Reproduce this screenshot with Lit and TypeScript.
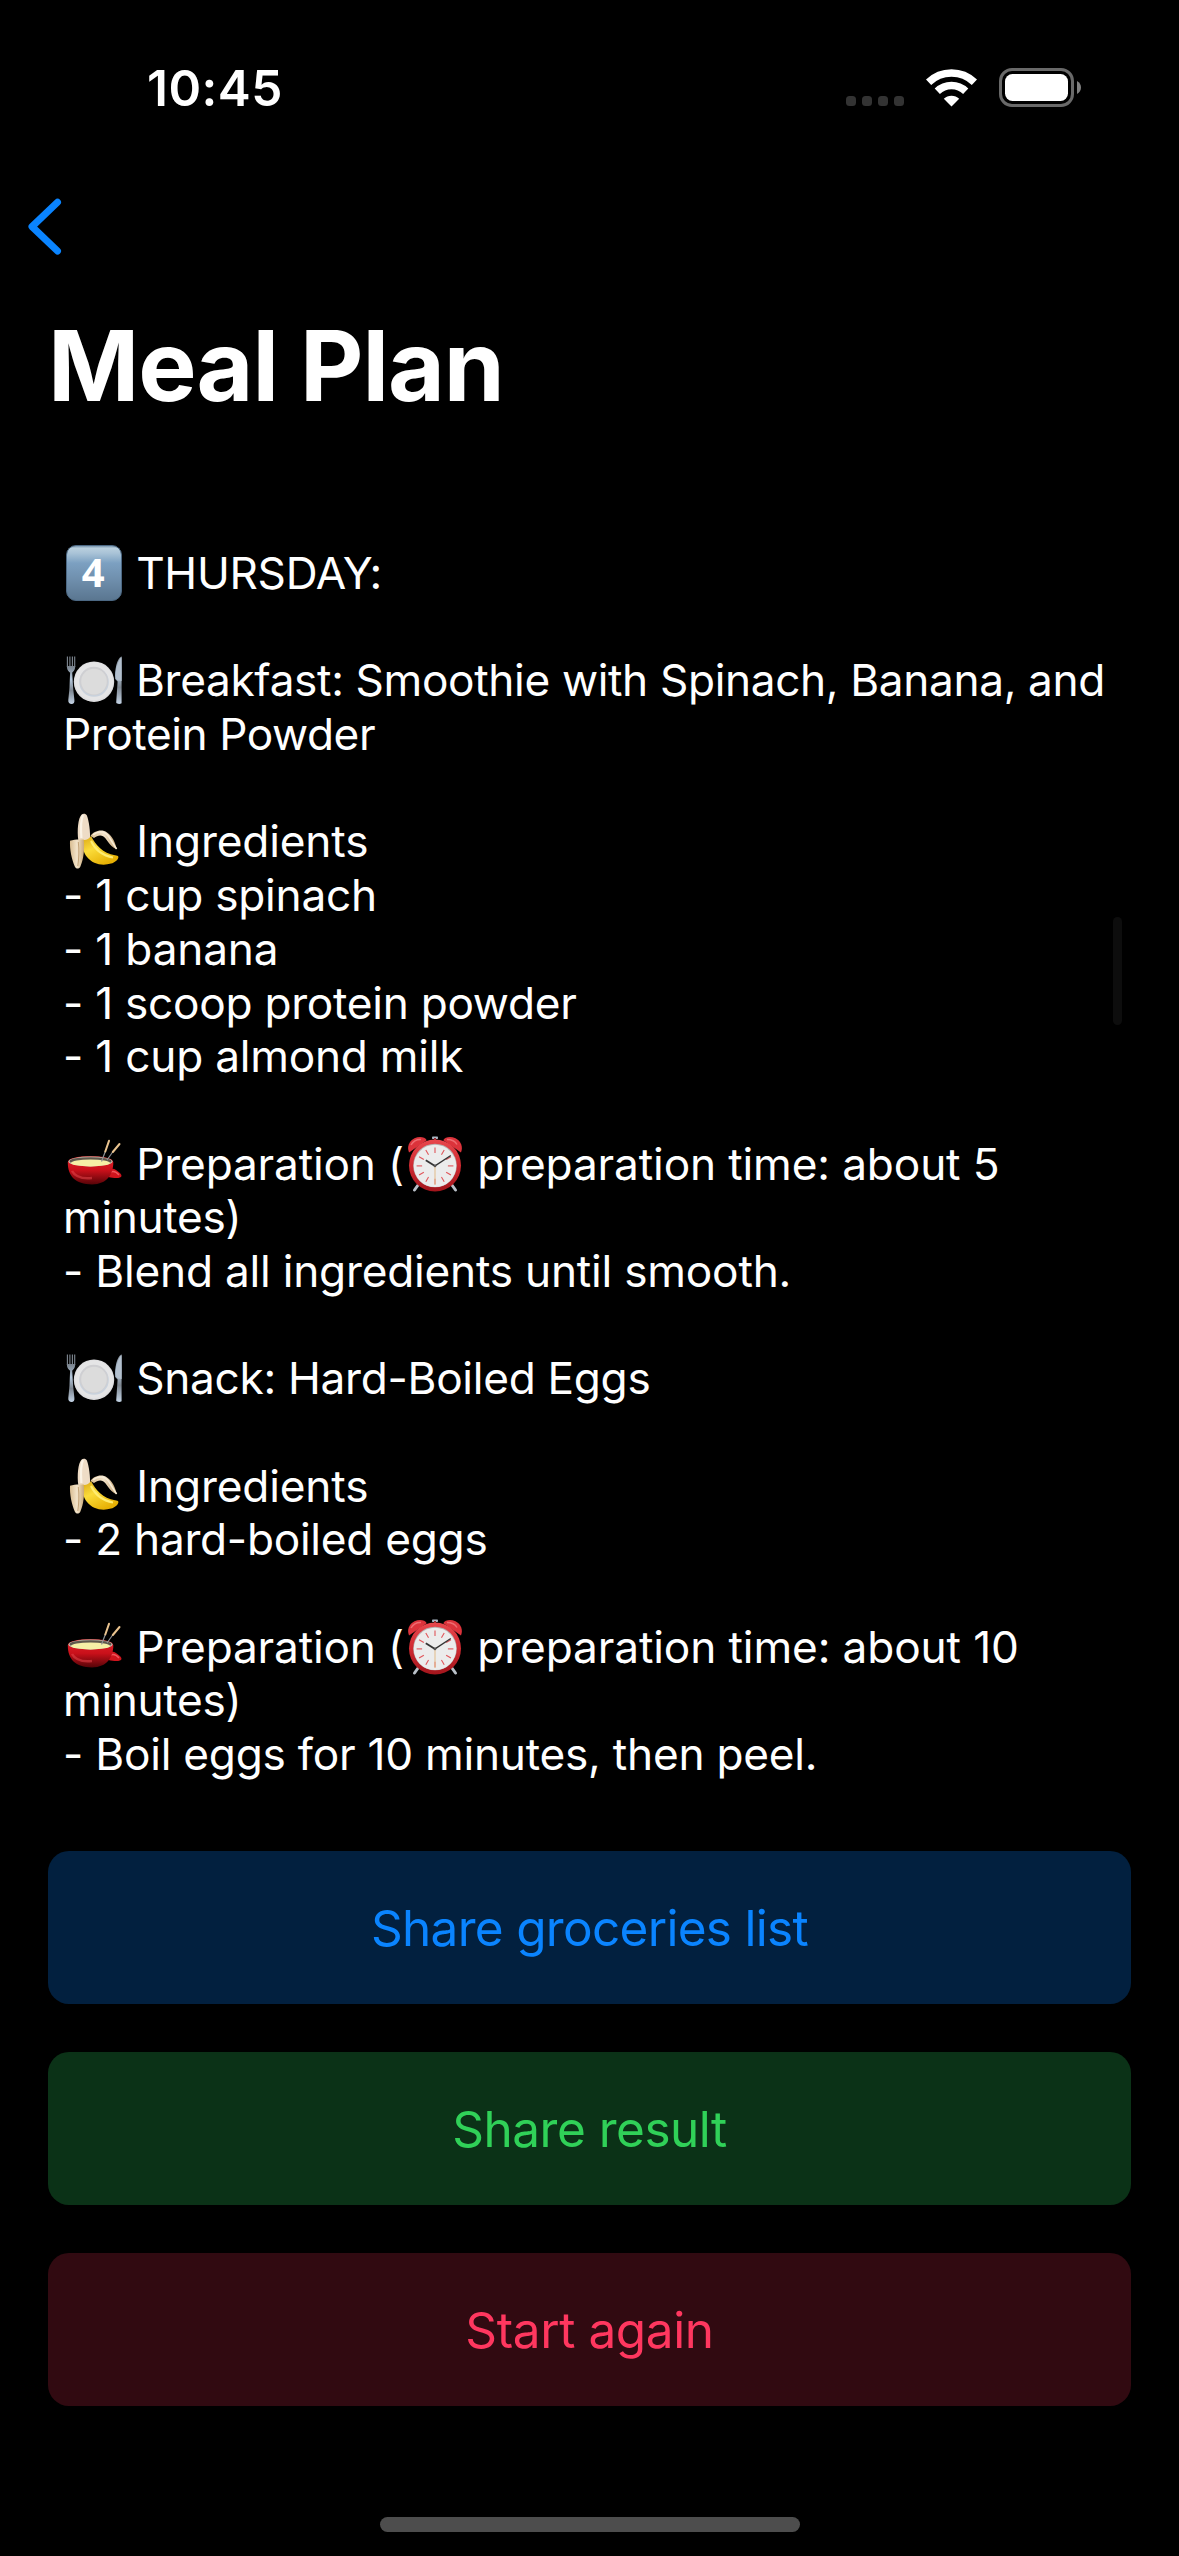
import { LitElement, html, css, svg, nothing } from "lit";
import { customElement, property } from "lit/decorators.js";

type Icon = "four" | "plate" | "banana" | "pot" | "clock";
interface Run { icon?: Icon; text?: string; track?: number }

const line = (...runs: Run[]): Run[] => runs;

const LINES: Run[][] = [
  line({ icon: "four" }, { text: " THURSDAY:", track: -0.3 }),
  line(),
  line({ icon: "plate" }, { text: " Breakfast: Smoothie with Spinach, Banana, and", track: -0.36 }),
  line({ text: "Protein Powder", track: -0.43 }),
  line(),
  line({ icon: "banana" }, { text: " Ingredients", track: -0.15 }),
  line({ text: "- 1 cup spinach", track: -0.23 }),
  line({ text: "- 1 banana", track: -0.2 }),
  line({ text: "- 1 scoop protein powder", track: -0.28 }),
  line({ text: "- 1 cup almond milk", track: -0.23 }),
  line(),
  line({ icon: "pot" }, { text: " Preparation (", track: -0.17 }, { icon: "clock" }, { text: " preparation time: about 5", track: -0.14 }),
  line({ text: "minutes)", track: -0.33 }),
  line({ text: "- Blend all ingredients until smooth.", track: -0.22 }),
  line(),
  line({ icon: "plate" }, { text: " Snack: Hard-Boiled Eggs", track: -0.29 }),
  line(),
  line({ icon: "banana" }, { text: " Ingredients", track: -0.15 }),
  line({ text: "- 2 hard-boiled eggs", track: -0.27 }),
  line(),
  line({ icon: "pot" }, { text: " Preparation (", track: -0.17 }, { icon: "clock" }, { text: " preparation time: about 10", track: -0.12 }),
  line({ text: "minutes)", track: -0.33 }),
  line({ text: "- Boil eggs for 10 minutes, then peel.", track: -0.24 }),
];

const TICKS = Array.from({ length: 12 }, (_, i) => i * 30);

const ART: Record<Icon, () => unknown> = {
  four: () => svg`
    <defs>
      <linearGradient id="k" x1="0" y1="0" x2="0" y2="1">
        <stop offset="0" stop-color="#6d8ba5"/><stop offset=".05" stop-color="#b9cfde"/>
        <stop offset=".14" stop-color="#a9c3d7"/><stop offset=".32" stop-color="#7ca0c1"/>
        <stop offset=".6" stop-color="#7090ae"/><stop offset="1" stop-color="#5a7690"/>
      </linearGradient>
    </defs>
    <rect x=".5" y=".5" width="55" height="55" rx="9.5" fill="url(#k)" stroke="#4c6883"/>
    <text x="27.3" y="42.2" text-anchor="middle" font-family="Noto Sans, sans-serif" font-weight="700" font-size="40" fill="#fff">4</text>`,
  plate: () => svg`
    <defs>
      <linearGradient id="m" x1="0" y1="0" x2="0" y2="1">
        <stop offset="0" stop-color="#77808a"/><stop offset=".35" stop-color="#b5c8dc"/>
        <stop offset=".65" stop-color="#7d8690"/><stop offset="1" stop-color="#c4d4e6"/>
      </linearGradient>
    </defs>
    <path d="M1.4 4.5V15M3.9 4.5V15M6.4 4.5V15M8.7 4.5V15" stroke="#7f8892" stroke-width="1.1"/>
    <path d="M.9 14h8.3c0 4-1.6 5.400-3 6.600l.9 15 1.300 12.400c.3 2.600-.8 3.900-2.800 3.900s-3.600-1.300-3.300-3.900L3.500 35.600l.6-15C2.400 19.400.9 18 .9 14z" fill="url(#m)"/>
    <path d="M55.600 4.300v47c-1.600 1-4.800.900-5.400-.8L51.600 29.500 49.200 27c-.6-9 1.600-20.500 6.400-22.700z" fill="url(#m)"/>
    <path d="M50 26.500c-.2-9 1.800-19 5.600-21.500V29l-3.500-.4z" fill="#b3c0ce"/>
    <circle cx="28" cy="29.700" r="20.200" fill="#dedee0"/>
    <circle cx="28" cy="29.200" r="19" fill="#e5e5e6"/>
    <circle cx="28" cy="30" r="14.800" fill="#c9d2dd"/>
    <circle cx="27.800" cy="29" r="14.200" fill="#cfcfd2"/>
    <circle cx="28" cy="29.600" r="12.800" fill="#dcdcdc"/>`,
  banana: () => svg`
    <defs>
      <linearGradient id="y" x1="0" y1="0" x2=".6" y2="1">
        <stop offset="0" stop-color="#d9a514"/><stop offset=".45" stop-color="#fbdc3a"/><stop offset="1" stop-color="#e6b004"/>
      </linearGradient>
      <linearGradient id="p" x1="0" y1="0" x2="1" y2="0">
        <stop offset="0" stop-color="#d9bd92"/><stop offset=".5" stop-color="#f3e4cb"/><stop offset="1" stop-color="#c9a877"/>
      </linearGradient>
    </defs>
    <path d="M12.300 27C11 18 12 5 15.500 1.800c1.700-1.600 4.400-1.100 5.400.8C23 8 24.500 19 24 27l-5 3z" fill="#eedcc6"/>
    <path d="M17 2c-2.800 6-2.300 14-1.600 23" stroke="#fbf3e6" stroke-width="2.200" fill="none"/>
    <path d="M24.500 23c3-4.700 11-7.600 16.500-3.500 5.500 4 8.400 9.800 9.600 16.500-4-.4-9-7.500-11-10.500-3-4.200-7.600-3.800-11.600-.5z" fill="url(#p)"/>
    <path d="M27 21.800c6-4.800 12.500-3.200 16 2.200 2.400 3.700 4.700 7.600 7.600 12" stroke="#f8ecd8" stroke-width="1.500" fill="none"/>
    <path d="M16.500 26.500c4.500 1.500 7-1.500 8.500-3.500 4.500 9 12 17.500 24 19.300 1.500.2 3.600.3 3.400 1.900-.4 2.800-3.600 5.200-7.400 6.400-9 2.600-18.500.4-24-6.600-3.800-4.900-5-10-4.500-17.500z" fill="url(#y)"/>
    <path d="M25 28c4 8.500 10.500 14.500 22 16.500" stroke="#ffec70" stroke-width="2" fill="none"/>
    <path d="M4 27.800c4-1 9-1.600 13.800-.9 1 9-.4 20-3.400 26.500-1 2.500-4.400 2.800-5.500.3C5.500 46 3.600 36 4 27.800z" fill="url(#p)"/>
    <path d="M12.300 29c1 8 .6 16-.5 24" stroke="#b99567" stroke-width=".8" fill="none"/>`,
  pot: () => svg`
    <defs>
      <linearGradient id="r" x1="0" y1="0" x2="0" y2="1">
        <stop offset="0" stop-color="#e3242b"/><stop offset=".5" stop-color="#c9101a"/><stop offset="1" stop-color="#560408"/>
      </linearGradient>
    </defs>
    <path d="M40 37c3-4.500 7-5.300 10-3 3.500 2.400 5.800 4.300 5.500 6-.6 2.800-7.500 2.300-13 1z" fill="#cf141d"/>
    <path d="M44 36.500c3-2 6-1 9 2.500" stroke="#f0555a" stroke-width="1.300" fill="none"/>
    <path d="M1.800 26.500C1.800 22 12 20.300 24.500 20.300S47.300 22 47.300 26.500C47.300 38 41 48.400 26 48.400 9 48.400 1.800 40 1.800 26.500z" fill="url(#r)"/>
    <path d="M6 35c3 5.500 10 8 20 7" stroke="#ec4a4f" stroke-width="2.500" opacity=".5" fill="none"/>
    <ellipse cx="24.500" cy="25.500" rx="22" ry="4.900" fill="#c9c3b4"/>
    <ellipse cx="24.500" cy="25.200" rx="21" ry="4" fill="#5f574c"/>
    <ellipse cx="24.500" cy="26.900" rx="19.500" ry="3.500" fill="#f6efa6"/>
    <path d="M35.500 25.500 39.500 15M41 24l6-8.500" stroke="#8d8f94" stroke-width="1.200"/>
    <path d="M39.300 15.500 43 4.800M46.800 16 53.500 8" stroke="#e9c38f" stroke-width="2" stroke-linecap="round"/>`,
  clock: () => svg`
    <defs>
      <linearGradient id="c" x1="0" y1="0" x2="0" y2="1">
        <stop offset="0" stop-color="#e8474d"/><stop offset=".5" stop-color="#cf2a31"/><stop offset="1" stop-color="#a3151c"/>
      </linearGradient>
    </defs>
    <path d="M12.500 47 7.500 54M43.500 47 48.500 54" stroke="#b9c0c8" stroke-width="3" stroke-linecap="round"/>
    <rect x="25" y=".5" width="6" height="2.500" rx=".8" fill="#aab7c4"/>
    <rect x="27" y="2" width="2" height="4" fill="#8f2a2f"/>
    <path d="M2 16.500C-.3 11 2 5 7.500 2.300 12.500 0 18 1 19.700 4.200z" fill="#dc333b"/>
    <path d="M54 16.500C56.300 11 54 5 48.500 2.300 43.500 0 38 1 36.300 4.200z" fill="#dc333b"/>
    <path d="M4 9C6 5.500 10 3.300 14 3.500M40 3.500c4 0 8 1.500 10 5" stroke="#ee6b70" stroke-width="1.500" fill="none"/>
    <circle cx="28" cy="29.500" r="26" fill="url(#c)"/>
    <circle cx="28" cy="29.500" r="21.800" fill="#b8b2b2"/>
    <circle cx="28" cy="29.900" r="21.200" fill="#ececec"/>
    ${TICKS.map((a) => svg`<path d="M28 11.500v5.500" stroke="#e0555a" stroke-width="1.100" transform="rotate(${a} 28 29.900)"/>`)}
    <path d="M28 29.900v19" stroke="#e3c092" stroke-width="1.100"/>
    <path d="M28 29.900 18.800 24.200" stroke="#333" stroke-width="1.800"/>
    <path d="M28 29.900 43.800 19.500" stroke="#333" stroke-width="1.300"/>
    <circle cx="28" cy="29.900" r="1.300" fill="#555"/>`,
};

@customElement("emoji-icon")
export class EmojiIcon extends LitElement {
  @property() name: Icon = "plate";
  static styles = css`
    :host { display: inline-block; width: 56px; height: 56px; margin: -10px 2px -12px 3px; vertical-align: baseline; }
    .art { display: block; width: 56px; height: 56px; overflow: visible; }
  `;
  render() {
    return html`<svg class="art" viewBox="0 0 56 56">${ART[this.name]()}</svg>`;
  }
}

@customElement("app-root")
export class AppRoot extends LitElement {
  static styles = css`
    :host { display: block; }
    .screen { display: flex; flex-direction: column; box-sizing: border-box; width: 1179px; height: 2556px; background: #000; color: #fff; font-family: Inter, "Liberation Sans", sans-serif; font-feature-settings: "calt" 0; overflow: hidden; }
    .status { display: flex; align-items: flex-start; height: 177px; box-sizing: border-box; padding: 57px 98px 0 147px; }
    .time { flex: 1; font-size: 49.5px; line-height: 62px; font-weight: 600; letter-spacing: 0.5px; }
    .dots { display: flex; gap: 6px; padding-top: 39px; margin-right: 22px; }
    .dot { width: 10px; height: 10px; border-radius: 3.500px; background: #333; }
    .wifi { width: 51px; height: 38px; margin: 12px 22px 0 0; }
    .battery { width: 82px; height: 39px; margin-top: 11px; }
    .nav { height: 99px; padding: 20px 0 0 27px; box-sizing: border-box; }
    .back { display: block; width: 35px; height: 59px; }
    .title { margin: 0; height: 254px; padding: 30px 0 0 48px; box-sizing: border-box; font-size: 98px; line-height: 119px; font-weight: 700; letter-spacing: -1.050px; white-space: nowrap; }
    .plan { position: relative; height: 1321px; padding: 17px 48px 0 63px; box-sizing: border-box; font-size: 44.200px; }
    .line { height: 53.700px; line-height: 53.700px; white-space: pre; }
    .scroll { position: absolute; left: 1113px; top: 387px; width: 9px; height: 108px; border-radius: 4.500px; background: #0d0d0d; }
    .actions { display: flex; flex-direction: column; gap: 48px; padding: 0 48px; }
    .btn { height: 153px; border: 0; border-radius: 21px; font: 400 49.500px Inter, sans-serif; display: flex; align-items: center; justify-content: center; }
    .blue { background: #02203f; color: #0a84ff; letter-spacing: -0.700px; }
    .green { background: #0b3217; color: #30d158; letter-spacing: -0.500px; }
    .red { background: #310a11; color: #ff375f; letter-spacing: -0.400px; }
    .home { width: 420px; height: 15px; border-radius: 7.500px; background: #4d4d4d; margin: 111px auto 0; }
  `;

  renderRun(r: Run) {
    if (r.icon) return html`<emoji-icon .name=${r.icon}></emoji-icon>`;
    return r.text ? html`<span style="letter-spacing:${r.track ?? 0}px">${r.text}</span>` : nothing;
  }

  render() {
    return html`
      <div class="screen">
        <div class="status">
          <div class="time">10:45</div>
          <div class="dots">${[0, 1, 2, 3].map(() => html`<span class="dot"></span>`)}</div>
          <svg class="wifi" viewBox="0 0 51 38">
            <g fill="none" stroke="#fff">
              <path d="M2.600 13.300A33 33 0 0 1 48.400 13.300" stroke-width="7.500"/>
              <path d="M11.300 22.300A20.500 20.500 0 0 1 39.700 22.300" stroke-width="7.500"/>
            </g>
            <path d="M25.500 37.500 17.800 29.800A11 11 0 0 1 33.200 29.800z" fill="#fff"/>
          </svg>
          <svg class="battery" viewBox="0 0 82 39">
            <rect x="1.500" y="1.500" width="72" height="36" rx="11.500" fill="none" stroke="#696969" stroke-width="3"/>
            <rect x="6" y="6" width="63" height="27" rx="7.500" fill="#fff"/>
            <path d="M78 13c2.600 1.200 4 3.800 4 6.500s-1.400 5.300-4 6.500z" fill="#808080"/>
          </svg>
        </div>
        <div class="nav">
          <svg class="back" viewBox="0 0 35 59"><path d="M30.500 5.200 5 29.600 30.500 54" fill="none" stroke="#0a84ff" stroke-width="7" stroke-linecap="round" stroke-linejoin="round"/></svg>
        </div>
        <h1 class="title">Meal Plan</h1>
        <div class="plan">
          ${LINES.map((runs) => html`<div class="line">${runs.map((r) => this.renderRun(r))}</div>`)}
          <div class="scroll"></div>
        </div>
        <div class="actions">
          <button class="btn blue">Share groceries list</button>
          <button class="btn green">Share result</button>
          <button class="btn red">Start again</button>
        </div>
        <div class="home"></div>
      </div>
    `;
  }
}
